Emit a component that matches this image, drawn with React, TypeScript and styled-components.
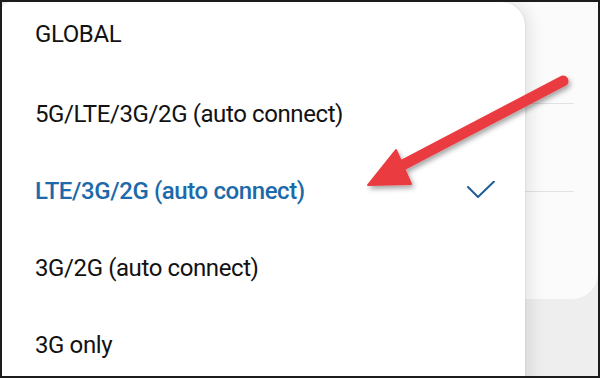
import React from "react";
import styled, { createGlobalStyle } from "styled-components";

const Global = createGlobalStyle`
  html, body { margin: 0; padding: 0; background: #ffffff; }
  * { box-sizing: border-box; }
`;

const Frame = styled.div`
  position: relative;
  width: 600px;
  height: 378px;
  border: 2px solid #1c1c1c;
  background: #eeeeee;
  overflow: hidden;
  font-family: Roboto, "Noto Sans", Arial, sans-serif;
`;

const BackPanel = styled.div`
  margin-left: 260px;
  height: 297px;
  background: #fbfbfb;
  border-bottom-right-radius: 26px;
  display: flex;
  flex-direction: column;
  padding: 101px 24px 0 0;
  gap: 87px;
`;

const Divider = styled.div`
  height: 1px;
  margin-left: 260px;
  background: #e2e2e2;
`;

const Menu = styled.ul`
  position: absolute;
  left: 0;
  top: 0;
  width: 523px;
  height: 420px;
  margin: 0;
  padding: 0;
  list-style: none;
  background: #ffffff;
  border-top-left-radius: 8px;
  border-top-right-radius: 24px;
  box-shadow: 6px 0 16px rgba(0, 0, 0, 0.09), 1px 0 2px rgba(0, 0, 0, 0.05);
`;

const Row = styled.li<{ $first?: boolean }>`
  height: ${(p) => (p.$first ? 80 : 77)}px;
  display: flex;
  align-items: flex-start;
  justify-content: space-between;
  padding: 18px 33px 0 33px;
`;

const Label = styled.span<{ $active?: boolean }>`
  font-size: 24px;
  line-height: 28px;
  color: ${(p) => (p.$active ? "#1c6aa9" : "#121212")};
  font-weight: ${(p) => (p.$active ? 500 : 400)};
  letter-spacing: -0.4px;
`;

const Check = styled.svg`
  width: 30px;
  height: 22px;
  margin-top: 4px;
  margin-right: -4px;
`;

const ArrowLayer = styled.svg`
  position: absolute;
  left: 0;
  top: 0;
  width: 600px;
  height: 378px;
  pointer-events: none;
`;

const items = [
  "GLOBAL",
  "5G/LTE/3G/2G (auto connect)",
  "LTE/3G/2G (auto connect)",
  "3G/2G (auto connect)",
  "3G only",
];

export default function App() {
  return (
    <>
      <Global />
      <Frame>
        <BackPanel>
          <Divider />
          <Divider />
        </BackPanel>
        <Menu>
          {items.map((t, i) => (
            <Row key={t} $first={i === 0}>
              <Label $active={i === 2}>{t}</Label>
              {i === 2 && (
                <Check viewBox="0 0 30 22">
                  <polyline
                    points="2,6 12,16 28,0.5"
                    fill="none"
                    stroke="#1f5d98"
                    strokeWidth="2"
                    strokeLinecap="round"
                    strokeLinejoin="round"
                  />
                </Check>
              )}
            </Row>
          ))}
        </Menu>
        <ArrowLayer viewBox="0 0 600 378">
          <defs>
            <filter id="sh" x="-20%" y="-20%" width="140%" height="140%">
              <feDropShadow dx="2" dy="3" stdDeviation="2.5" floodColor="#000" floodOpacity="0.35" />
            </filter>
          </defs>
          <g filter="url(#sh)" fill="#ea3b3f" stroke="#ea3b3f">
            <line x1="561" y1="79" x2="395" y2="166" strokeWidth="11" strokeLinecap="round" />
            <polygon points="366,183 394,148 409,182" strokeWidth="2" strokeLinejoin="round" />
          </g>
        </ArrowLayer>
      </Frame>
    </>
  );
}
